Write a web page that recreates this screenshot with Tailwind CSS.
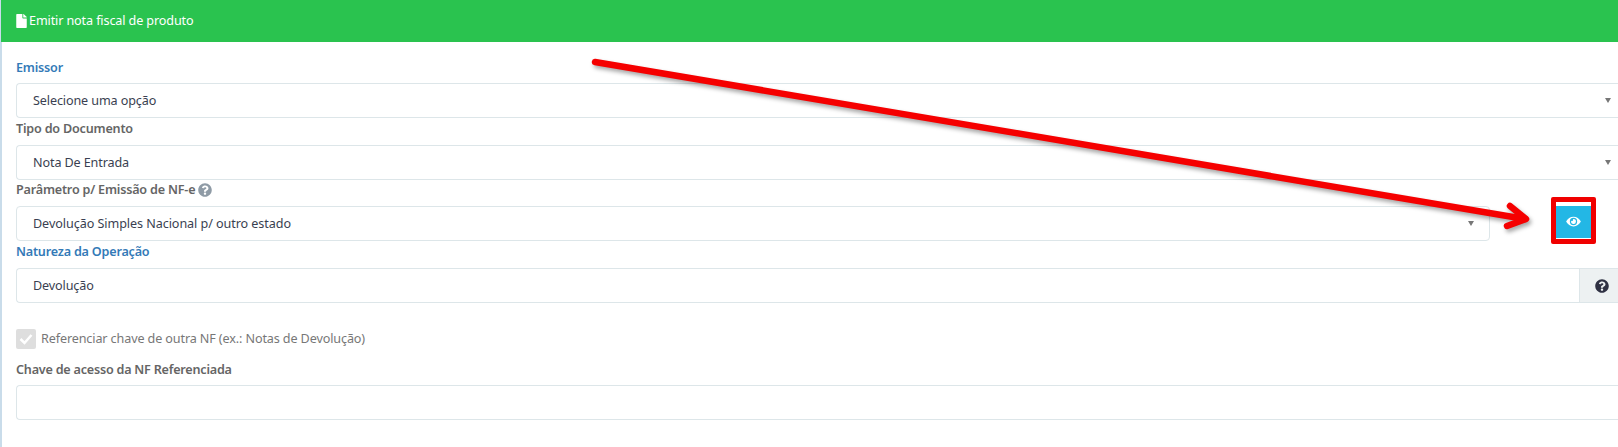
<!DOCTYPE html>
<html lang="pt-BR">
<head>
    <meta charset="UTF-8">
    <title>Emitir nota fiscal de produto</title>
    <script src="https://cdn.jsdelivr.net/npm/@tailwindcss/browser@4"></script>
</head>
<body class="relative h-[447px] w-[1618px] overflow-hidden bg-white font-['Noto_Sans',sans-serif] text-[12.600px] tracking-[-0.120px]">
    <div class="h-full border-l-2 border-[#c9dcea]">
        <div class="-ml-px flex h-[42px] items-center gap-[2px] bg-[#2ac34f] pl-[15px] text-white">
            <svg class="h-[14px] w-[11px]" viewBox="0 0 384 512" fill="currentColor"><path d="M224 136V0H24C10.700 0 0 10.700 0 24v464c0 13.300 10.700 24 24 24h336c13.300 0 24-10.700 24-24V160H248c-13.200 0-24-10.800-24-24zm160-14.100v6.100H256V0h6.100c6.400 0 12.500 2.500 17 7l97.900 98c4.500 4.500 7 10.600 7 16.900z"/></svg>
            <span>Emitir nota fiscal de produto</span>
        </div>
        <div class="pl-[14px]">
            <label class="block h-[41px] pt-[17px] font-semibold tracking-[-0.200px] text-[#337ab7]">Emissor</label>
            <div class="flex h-[35px] items-center justify-between rounded-l border border-r-0 border-[#dde6e9] pl-4 pr-[7px] text-[#3a3f51]">
                <span class="pt-px">Selecione uma opção</span>
                <span class="h-0 w-0 border-x-[3.500px] border-t-[5px] border-x-transparent border-t-[#777]"></span>
            </div>
            <label class="block h-[27px] pt-[2px] font-semibold tracking-[-0.200px] text-[#656565]">Tipo do Documento</label>
            <div class="flex h-[35px] items-center justify-between rounded-l border border-r-0 border-[#dde6e9] pl-4 pr-[7px] text-[#3a3f51]">
                <span class="pt-px">Nota De Entrada</span>
                <span class="h-0 w-0 border-x-[3.500px] border-t-[5px] border-x-transparent border-t-[#777]"></span>
            </div>
            <label class="flex h-[26px] items-start gap-[3px] pt-[1px] font-semibold tracking-[-0.200px] text-[#656565]">
                <span>Parâmetro p/ Emissão de NF-e</span>
                <svg class="mt-[2px] h-[14px] w-[14px]" viewBox="0 0 512 512" fill="#8f9ba6"><path d="M504 256c0 137-111 248-248 248S8 393 8 256 119 8 256 8s248 111 248 248zM263 90c-54 0-89 23-116 64-4 5-3 12 3 16l35 26c5 4 13 3 17-2 18-23 30-36 58-36 21 0 47 14 47 34 0 16-13 24-34 35-24 14-56 31-56 74v7c0 7 5 12 12 12h56c7 0 12-5 12-12v-2c0-30 87-31 87-111 0-60-62-105-121-105zm-7 258c-24 0-44 20-44 44s20 44 44 44 44-20 44-44-20-44-44-44z"/></svg>
            </label>
            <div class="flex items-start">
                <div class="flex h-[35px] w-[1474px] items-center justify-between rounded border border-[#dde6e9] pl-4 pr-[15px] text-[#3a3f51]">
                    <span class="pt-px tracking-[-0.070px]">Devolução Simples Nacional p/ outro estado</span>
                    <span class="h-0 w-0 border-x-[3.500px] border-t-[5px] border-x-transparent border-t-[#777]"></span>
                </div>
            </div>
            <label class="block h-[27px] pt-[2px] font-semibold tracking-[-0.200px] text-[#337ab7]">Natureza da Operação</label>
            <div class="flex h-[35px] rounded-l border border-r-0 border-[#dde6e9] text-[#3a3f51]">
                <span class="flex-1 self-center pl-4 pt-px">Devolução</span>
                <span class="flex w-[39px] items-center justify-center border-l border-[#dde6e9] bg-[#edf1f2] pl-[6px]">
                    <svg class="h-[14px] w-[14px]" viewBox="0 0 512 512" fill="#2f3143"><path d="M504 256c0 137-111 248-248 248S8 393 8 256 119 8 256 8s248 111 248 248zM263 90c-54 0-89 23-116 64-4 5-3 12 3 16l35 26c5 4 13 3 17-2 18-23 30-36 58-36 21 0 47 14 47 34 0 16-13 24-34 35-24 14-56 31-56 74v7c0 7 5 12 12 12h56c7 0 12-5 12-12v-2c0-30 87-31 87-111 0-60-62-105-121-105zm-7 258c-24 0-44 20-44 44s20 44 44 44 44-20 44-44-20-44-44-44z"/></svg>
                </span>
            </div>
            <div class="mt-[26px] flex items-center gap-[5px] text-[#777]">
                <span class="flex h-5 w-5 items-center justify-center rounded-[2px] bg-[#dedede]">
                    <svg class="h-3 w-[14px]" viewBox="0 0 28 24" fill="none" stroke="white" stroke-width="5"><path d="M3 12l8 8L25 4"/></svg>
                </span>
                <span>Referenciar chave de outra NF (ex.: Notas de Devolução)</span>
            </div>
            <label class="mt-3 block h-[24px] font-semibold tracking-[-0.220px] text-[#656565]">Chave de acesso da NF Referenciada</label>
            <div class="h-[35px] rounded-l border border-r-0 border-[#dde6e9]"></div>
        </div>
    </div>

    <!-- botao destacado -->
    <div class="absolute left-[1551px] top-[197px] h-[47px] w-[45px] rounded-[2px] border-[5px] border-[#f00000] bg-white">
        <div class="mt-[4px] flex h-[32px] items-center justify-center bg-[#23b7e5] pb-[2px]">
            <svg class="h-[13px] w-[15px]" viewBox="0 0 576 512" fill="white"><path d="M572.500 241.400C518.300 135.600 410.900 64 288 64S57.700 135.600 3.500 241.400a32.400 32.400 0 0 0 0 29.200C57.700 376.400 165.100 448 288 448s230.300-71.600 284.500-177.400a32.400 32.400 0 0 0 0-29.200zM288 400a144 144 0 1 1 144-144 143.900 143.900 0 0 1-144 144zm0-240a95.300 95.300 0 0 0-25.300 3.800 47.900 47.900 0 0 1-66.900 66.900A95.800 95.800 0 1 0 288 160z"/></svg>
        </div>
    </div>

    <!-- seta -->
    <svg class="absolute left-0 top-0 drop-shadow-[2px_3px_2px_rgba(0,0,0,0.35)]" width="1618" height="447" fill="none" stroke="#f50000" stroke-linecap="round" stroke-linejoin="round">
        <path stroke-width="6.500" d="M595 62L1525 219"/>
        <path stroke-width="6.500" d="M1510 206L1526 219L1507 226"/>
    </svg>
</body>
</html>
